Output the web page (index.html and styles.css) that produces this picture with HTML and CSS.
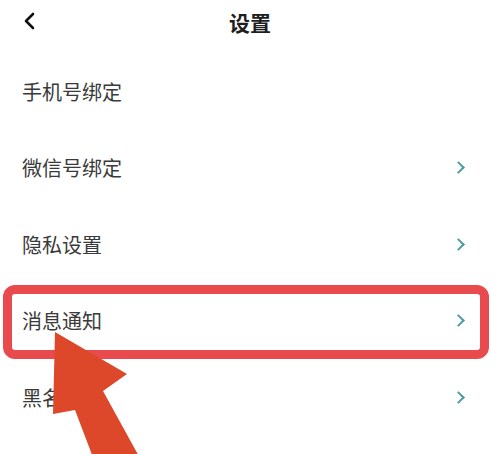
FILE: index.html
```html
<!DOCTYPE html>
<html lang="zh-CN">
<head>
  <meta charset="UTF-8" />
  <title>设置</title>
  <meta name="viewport" content="width=device-width, initial-scale=1.0">
  <link rel="stylesheet" href="styles.css">
</head>
<body>

<div class="page">
  <header class="topbar">
    <svg class="back" width="14" height="18" viewBox="0 0 14 18">
      <path d="M11 2 L4 9 L11 16" fill="none" stroke="#111" stroke-width="2.6" stroke-linecap="round" stroke-linejoin="round"/>
    </svg>
    <h1>设置</h1>
  </header>

  <ul class="menu">
    <li class="row"><span>手机号绑定</span></li>
    <li class="row"><span>微信号绑定</span><i class="chev"></i></li>
    <li class="row"><span>隐私设置</span><i class="chev"></i></li>
    <li class="row"><span>消息通知</span><i class="chev"></i></li>
    <li class="row"><span>黑名单</span><i class="chev"></i></li>
  </ul>

  <!-- annotation overlay -->
  <div class="highlight"></div>
  <svg class="pointer" width="500" height="454" viewBox="0 0 500 454">
    <polygon points="55,332 127,374 103,391 141,460 94,460 75,410 53,414" fill="#dc4829"/>
  </svg>
</div>

</body>
</html>
```

FILE: styles.css
```css
html, body {
  margin: 0;
  padding: 0;
  background: #fff;
  font-family: 'Noto Sans CJK SC', 'Noto Sans', sans-serif;
  color: #333;
}

.page {
  position: relative;
  width: 500px;
  height: 454px;
  overflow: hidden;
}

.topbar {
  position: relative;
  height: 44px;
  display: flex;
  align-items: center;
  justify-content: center;
}

.topbar .back {
  position: absolute;
  left: 22px;
  top: 12px;
}

.topbar h1 {
  margin: 0;
  font-size: 21px;
  font-weight: 700;
  color: #1e1e1e;
  letter-spacing: 0;
}

.menu {
  list-style: none;
  margin: 9px 0 0;
  padding: 0;
}

.row {
  height: 76.5px;
  display: flex;
  align-items: center;
  justify-content: space-between;
  padding: 0 37px 0 22px;
  font-size: 20px;
  color: #3a3a3a;
}

.chev {
  width: 7px;
  height: 7px;
  border-top: 2.5px solid #4e9c9e;
  border-right: 2.5px solid #4e9c9e;
  transform: rotate(45deg);
}

.highlight {
  position: absolute;
  left: 3px;
  top: 285px;
  width: 468px;
  height: 56px;
  border: 9px solid #e94a4e;
  border-radius: 12px;
}

.pointer {
  position: absolute;
  left: 0;
  top: 0;
}
```
